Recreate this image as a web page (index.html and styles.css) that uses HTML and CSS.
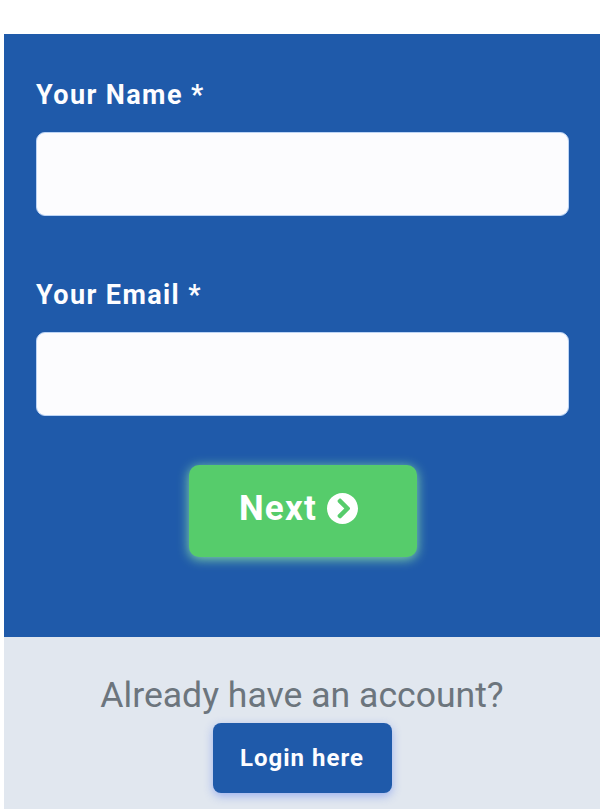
FILE: index.html
```html
<!DOCTYPE html>
<html lang="en">
<head>
    <meta charset="UTF-8">
    <meta name="viewport" content="width=device-width, initial-scale=1.0">
    <title>Register</title>
    <link rel="stylesheet" href="styles.css">
</head>
<body>

    <div class="page">
        <form class="panel">
            <div class="field">
                <label for="name">Your Name *</label>
                <input type="text" id="name">
            </div>

            <div class="field">
                <label for="email">Your Email *</label>
                <input type="text" id="email">
            </div>

            <button type="button" class="next-btn">
                Next
                <svg class="next-icon" viewBox="8 8 496 496" aria-hidden="true">
                    <path fill="#fff" d="M256 8c137 0 248 111 248 248S393 504 256 504 8 393 8 256 119 8 256 8zm113.900 231L234.400 103.500c-9.400-9.400-24.600-9.400-33.900 0l-17 17c-9.400 9.400-9.400 24.600 0 33.900L285.100 256 183.500 357.600c-9.400 9.400-9.400 24.600 0 33.900l17 17c9.400 9.400 24.600 9.400 33.900 0L369.900 273c9.400-9.400 9.400-24.600 0-34z"/>
                </svg>
            </button>
        </form>

        <div class="login-box">
            <p>Already have an account?</p>
            <button type="button" class="login-btn">Login here</button>
        </div>
    </div>

</body>
</html>
```

FILE: styles.css
```css
body {
    margin: 0;
    background: #fff;
    font-family: Roboto, Arial, sans-serif;
}

.page {
    height: 809px;
    box-sizing: border-box;
    padding: 34px 0 0 4px;
    overflow: hidden;
}

.panel {
    display: flex;
    flex-direction: column;
    height: 603px;
    box-sizing: border-box;
    padding: 45px 31px 0 32px;
    background: #1f5aaa;
}

.field {
    margin-bottom: 63px;
}

.field:last-of-type {
    margin-bottom: 49px;
}

label {
    display: block;
    margin-bottom: 21px;
    color: #fdfdff;
    font-size: 27px;
    font-weight: 700;
    line-height: 32px;
    letter-spacing: 1.4px;
}

input {
    display: block;
    width: 100%;
    height: 84px;
    box-sizing: border-box;
    border: 1px solid #bcd4f5;
    border-radius: 9px;
    background: #fcfcfe;
}

.next-btn {
    display: flex;
    align-items: center;
    justify-content: center;
    gap: 10px;
    align-self: center;
    width: 228px;
    height: 92px;
    margin-left: 1px;
    padding: 0 9px 6px 0;
    border: none;
    border-radius: 10px;
    background: #56cc6b;
    box-shadow: 0 2px 12px rgba(150, 240, 165, 0.85);
    color: #fff;
    font-family: inherit;
    font-size: 35px;
    font-weight: 700;
    letter-spacing: 1.2px;
}

.next-icon {
    width: 31px;
    height: 31px;
}

.login-box {
    display: flex;
    flex-direction: column;
    align-items: center;
    height: 172px;
    background: #e1e7ef;
}

.login-box p {
    margin: 38px 0 8px;
    color: #6c757d;
    font-size: 35.6px;
    line-height: 40px;
}

.login-btn {
    width: 179px;
    height: 70px;
    border: none;
    border-radius: 8px;
    background: #1f5aaa;
    box-shadow: 0 3px 10px rgba(70, 110, 240, 0.45);
    color: #fdfdff;
    font-family: inherit;
    font-size: 24px;
    font-weight: 700;
    letter-spacing: 1px;
}
```
